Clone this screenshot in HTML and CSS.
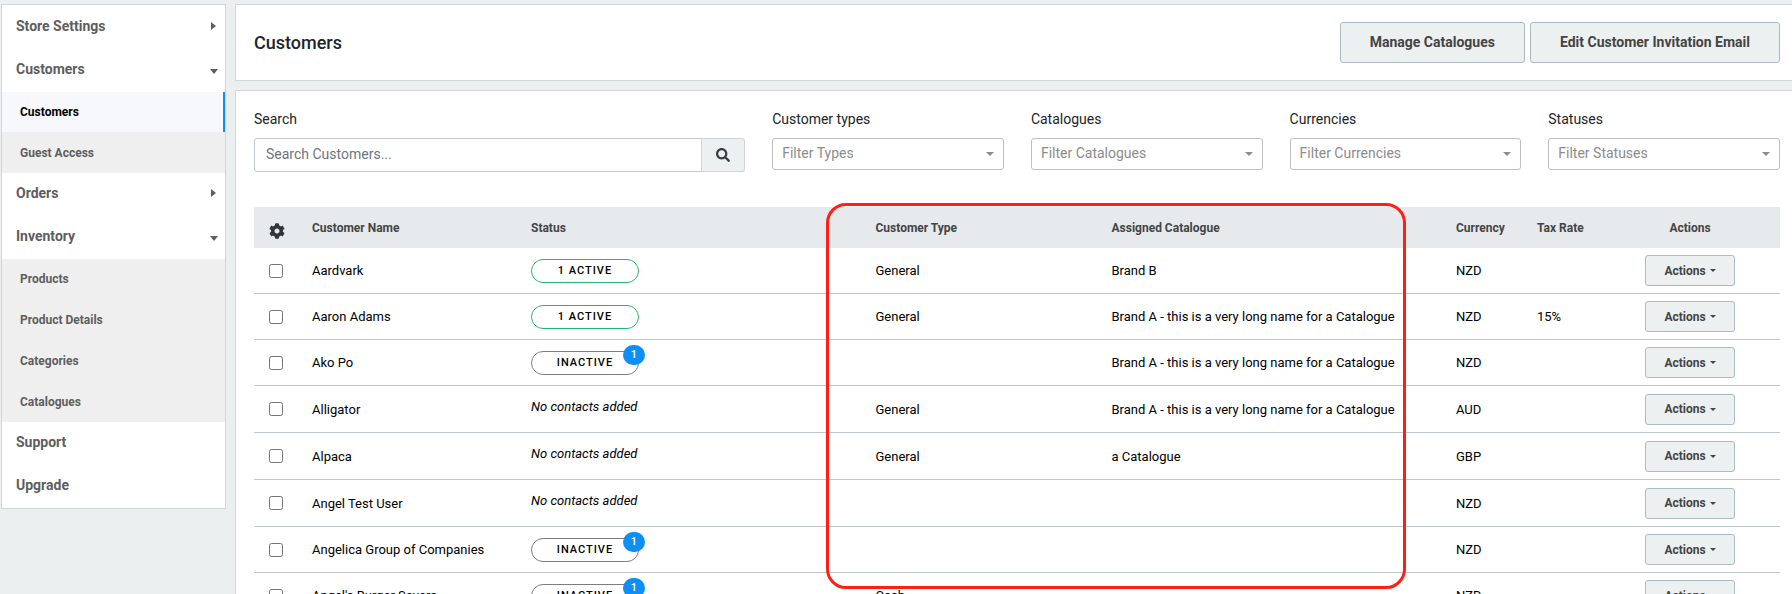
FILE: index.html
```html
<!DOCTYPE html>
<html lang="en">
<head>
  <meta charset="utf-8">
  <title>Customers</title>
  <link rel="stylesheet" href="styles.css">
</head>
<body>
  <nav class="sidebar">
    <a class="menu-item" href="#">Store Settings <span class="arrow-right"></span></a>
    <a class="menu-item" href="#">Customers <span class="arrow-down"></span></a>
    <div class="submenu">
      <a class="sub-item active" href="#">Customers</a>
      <a class="sub-item" href="#">Guest Access</a>
    </div>
    <a class="menu-item" href="#">Orders <span class="arrow-right"></span></a>
    <a class="menu-item" href="#">Inventory <span class="arrow-down"></span></a>
    <div class="submenu">
      <a class="sub-item" href="#">Products</a>
      <a class="sub-item" href="#">Product Details</a>
      <a class="sub-item" href="#">Categories</a>
      <a class="sub-item" href="#">Catalogues</a>
    </div>
    <a class="menu-item" href="#">Support</a>
    <a class="menu-item" href="#">Upgrade</a>
  </nav>

  <main class="main">
    <header class="card page-header">
      <h1>Customers</h1>
      <div class="header-buttons">
        <button class="btn btn-large" type="button">Manage Catalogues</button>
        <button class="btn btn-large" type="button">Edit Customer Invitation Email</button>
      </div>
    </header>

    <section class="card content">
      <form class="filters">
        <div class="field">
          <label for="search">Search</label>
          <div class="search-group">
            <input id="search" type="text" placeholder="Search Customers...">
            <button class="search-btn" type="button" aria-label="Search">
              <svg width="14" height="14" viewBox="0 0 512 512"><path fill="#3a3d3f" d="M505 442.700 405.300 343c-4.500-4.500-10.600-7-17-7H372c27.600-35.300 44-79.700 44-128C416 93.100 322.900 0 208 0S0 93.100 0 208s93.100 208 208 208c48.300 0 92.700-16.400 128-44v16.300c0 6.400 2.500 12.500 7 17l99.700 99.700c9.400 9.400 24.600 9.400 33.900 0l28.300-28.300c9.400-9.400 9.400-24.600.1-34zM208 336c-70.700 0-128-57.200-128-128 0-70.700 57.200-128 128-128 70.700 0 128 57.200 128 128 0 70.700-57.200 128-128 128z"/></svg>
            </button>
          </div>
        </div>
        <div class="field">
          <label for="types">Customer types</label>
          <div class="select"><select id="types"><option>Filter Types</option></select></div>
        </div>
        <div class="field">
          <label for="catalogues">Catalogues</label>
          <div class="select"><select id="catalogues"><option>Filter Catalogues</option></select></div>
        </div>
        <div class="field">
          <label for="currencies">Currencies</label>
          <div class="select"><select id="currencies"><option>Filter Currencies</option></select></div>
        </div>
        <div class="field">
          <label for="statuses">Statuses</label>
          <div class="select"><select id="statuses"><option>Filter Statuses</option></select></div>
        </div>
      </form>

      <div class="table-wrap">
        <table class="customers">
          <colgroup>
            <col class="col-check">
            <col class="col-name">
            <col>
            <col class="col-type">
            <col>
            <col class="col-currency">
            <col class="col-tax">
            <col class="col-actions">
          </colgroup>
          <thead>
            <tr>
              <th class="check"><svg class="gear" width="16" height="16" viewBox="0 0 512 512" role="img" aria-label="Settings"><path fill="#333638" d="M487.400 315.700l-42.600-24.600c4.300-23.200 4.300-47 0-70.200l42.600-24.600c4.900-2.800 7.100-8.600 5.500-14-11.100-35.600-30-67.800-54.700-94.600-3.800-4.100-10-5.100-14.800-2.300L380.800 110c-17.900-15.400-38.500-27.300-60.800-35.100V25.800c0-5.600-3.900-10.500-9.400-11.700-36.700-8.200-74.300-7.800-109.200 0-5.500 1.200-9.400 6.100-9.400 11.700V75c-22.200 7.900-42.800 19.800-60.800 35.100L88.700 85.500c-4.900-2.800-11-1.900-14.800 2.300-24.700 26.700-43.600 58.900-54.700 94.600-1.700 5.400.6 11.200 5.500 14L67.300 221c-4.300 23.200-4.300 47 0 70.200l-42.600 24.600c-4.900 2.800-7.100 8.600-5.500 14 11.100 35.600 30 67.800 54.700 94.600 3.800 4.100 10 5.100 14.800 2.300l42.600-24.600c17.900 15.400 38.500 27.300 60.800 35.100v49.200c0 5.600 3.900 10.500 9.400 11.700 36.700 8.200 74.300 7.800 109.200 0 5.500-1.200 9.400-6.100 9.400-11.700v-49.200c22.200-7.900 42.800-19.800 60.800-35.100l42.600 24.600c4.900 2.800 11 1.900 14.800-2.300 24.700-26.700 43.600-58.900 54.700-94.600 1.500-5.500-.7-11.300-5.600-14.100zM256 336c-44.100 0-80-35.900-80-80s35.900-80 80-80 80 35.900 80 80-35.900 80-80 80z"/></svg></th>
              <th>Customer Name</th>
              <th>Status</th>
              <th>Customer Type</th>
              <th>Assigned Catalogue</th>
              <th>Currency</th>
              <th>Tax Rate</th>
              <th class="actions">Actions</th>
            </tr>
          </thead>
          <tbody>
            <tr>
              <td class="check"><input type="checkbox" aria-label="Aardvark"></td>
              <td>Aardvark</td>
              <td><span class="status status-active">1 ACTIVE</span></td>
              <td>General</td>
              <td>Brand B</td>
              <td>NZD</td>
              <td></td>
              <td class="actions"><button class="btn btn-small" type="button">Actions</button></td>
            </tr>
            <tr>
              <td class="check"><input type="checkbox" aria-label="Aaron Adams"></td>
              <td>Aaron Adams</td>
              <td><span class="status status-active">1 ACTIVE</span></td>
              <td>General</td>
              <td>Brand A - this is a very long name for a Catalogue</td>
              <td>NZD</td>
              <td>15%</td>
              <td class="actions"><button class="btn btn-small" type="button">Actions</button></td>
            </tr>
            <tr>
              <td class="check"><input type="checkbox" aria-label="Ako Po"></td>
              <td>Ako Po</td>
              <td><span class="status">INACTIVE<span class="badge">1</span></span></td>
              <td></td>
              <td>Brand A - this is a very long name for a Catalogue</td>
              <td>NZD</td>
              <td></td>
              <td class="actions"><button class="btn btn-small" type="button">Actions</button></td>
            </tr>
            <tr>
              <td class="check"><input type="checkbox" aria-label="Alligator"></td>
              <td>Alligator</td>
              <td><em class="no-contacts">No contacts added</em></td>
              <td>General</td>
              <td>Brand A - this is a very long name for a Catalogue</td>
              <td>AUD</td>
              <td></td>
              <td class="actions"><button class="btn btn-small" type="button">Actions</button></td>
            </tr>
            <tr>
              <td class="check"><input type="checkbox" aria-label="Alpaca"></td>
              <td>Alpaca</td>
              <td><em class="no-contacts">No contacts added</em></td>
              <td>General</td>
              <td>a Catalogue</td>
              <td>GBP</td>
              <td></td>
              <td class="actions"><button class="btn btn-small" type="button">Actions</button></td>
            </tr>
            <tr>
              <td class="check"><input type="checkbox" aria-label="Angel Test User"></td>
              <td>Angel Test User</td>
              <td><em class="no-contacts">No contacts added</em></td>
              <td></td>
              <td></td>
              <td>NZD</td>
              <td></td>
              <td class="actions"><button class="btn btn-small" type="button">Actions</button></td>
            </tr>
            <tr>
              <td class="check"><input type="checkbox" aria-label="Angelica Group of Companies"></td>
              <td>Angelica Group of Companies</td>
              <td><span class="status">INACTIVE<span class="badge">1</span></span></td>
              <td></td>
              <td></td>
              <td>NZD</td>
              <td></td>
              <td class="actions"><button class="btn btn-small" type="button">Actions</button></td>
            </tr>
            <tr>
              <td class="check"><input type="checkbox" aria-label="Angel's Burger Savers"></td>
              <td>Angel's Burger Savers</td>
              <td><span class="status">INACTIVE<span class="badge">1</span></span></td>
              <td>Cash</td>
              <td></td>
              <td>NZD</td>
              <td></td>
              <td class="actions"><button class="btn btn-small" type="button">Actions</button></td>
            </tr>
          </tbody>
        </table>
        <div class="highlight"></div>
      </div>
    </section>
  </main>
</body>
</html>
```
FILE: styles.css
```css
* {
  box-sizing: border-box;
}

body {
  display: flex;
  align-items: flex-start;
  gap: 9px;
  height: 100vh;
  margin: 0;
  padding: 4px 0 0 1px;
  overflow: hidden;
  background-color: #ebeff0;
  color: #212529;
  font-family: Roboto, sans-serif;
  font-size: 14px;
}

a {
  text-decoration: none;
}

button, input, select {
  font-family: inherit;
  font-size: inherit;
}

/* sidebar */
.sidebar {
  flex: none;
  width: 225px;
  padding-top: 1px;
  border: 1px solid #d3d6d8;
  background-color: white;
}

.menu-item {
  display: flex;
  align-items: center;
  justify-content: space-between;
  height: 43px;
  padding: 0 7px 3px 14px;
  color: #5e5e5e;
  font-weight: bold;
}

.arrow-right {
  margin-right: 2px;
  border: 4px solid transparent;
  border-left: 5px solid #5e5e5e;
  border-right: 0;
}

.arrow-down {
  margin-top: 4px;
  border: 4px solid transparent;
  border-top: 5px solid #5e5e5e;
  border-bottom: 0;
}

.submenu {
  display: flex;
  flex-direction: column;
  gap: 1px;
  background-color: #efefef;
}

.sub-item {
  height: 40px;
  padding-left: 18px;
  color: #5e5e5e;
  font-size: 12px;
  font-weight: bold;
  line-height: 40px;
}

.sub-item.active {
  border-right: 2px solid #0d8ff5;
  background-color: #f6f8fb;
  color: black;
}

/* main */
.main {
  flex: 1;
  min-width: 0;
}

.card {
  border: 1px solid #d3d6d8;
  border-right: 0;
  background-color: white;
  padding: 17px 12px 17px 18px;
}

.page-header {
  display: flex;
  align-items: center;
  justify-content: space-between;
  margin-bottom: 9px;
}

h1 {
  margin: 0;
  font-size: 18px;
  font-weight: 500;
}

.header-buttons {
  display: flex;
  gap: 5px;
}

.btn {
  border: 1px solid #a9bbc1;
  border-radius: 3px;
  background-color: #ecf0f1;
  color: #444;
  font-weight: bold;
  cursor: pointer;
}

.btn-large {
  height: 41px;
  padding: 0 29px 2px;
}

.btn-small {
  display: inline-flex;
  align-items: center;
  justify-content: center;
  gap: 4px;
  width: 90px;
  height: 31px;
  font-size: 12px;
}

.btn-small::after {
  content: "";
  border: 3px solid transparent;
  border-top-color: #444;
  border-bottom: 0;
}

/* filters */
.filters {
  display: grid;
  grid-template-columns: 53fr repeat(4, 25fr);
  gap: 27px;
  height: 99px;
}

.field label {
  display: block;
  margin-bottom: 8px;
  line-height: 22px;
}

.search-group {
  display: flex;
  height: 34px;
}

.search-group input {
  flex: 1;
  min-width: 0;
  padding: 0 11px 2px;
  border: 1px solid #c0c8cf;
  border-radius: 3px 0 0 3px;
}

.search-group input::placeholder {
  color: #6c757d;
}

.search-btn {
  width: 44px;
  margin-left: -1px;
  padding: 0;
  border: 1px solid #cfd4d7;
  border-radius: 0 3px 3px 0;
  background-color: #ecf0f1;
}

.search-btn svg {
  display: block;
  margin: 0 auto;
}

.select {
  position: relative;
}

.select select {
  width: 100%;
  height: 32px;
  padding: 0 9px 2px;
  appearance: none;
  border: 1px solid #bfbfbf;
  border-radius: 3px;
  background-color: white;
  color: #8c8c8c;
}

.select::after {
  content: "";
  position: absolute;
  top: 14px;
  right: 10px;
  border: 4px solid transparent;
  border-top-color: #8c8c8c;
  border-bottom: 0;
}

/* table */
.table-wrap {
  position: relative;
}

.customers {
  width: 100%;
  table-layout: fixed;
  border-collapse: separate;
  border-spacing: 0;
  color: black;
  font-size: 13px;
}

.col-check { width: 50px; }
.col-name { width: 219px; }
.col-type { width: 236px; }
.col-currency { width: 81px; }
.col-tax { width: 71px; }
.col-actions { width: 180px; }

.customers th {
  height: 41px;
  padding: 0 8px;
  background-color: #e6eaed;
  color: #444;
  font-size: 12px;
  text-align: left;
}

.customers td {
  height: 46px;
  padding: 0 8px;
  border-bottom: 1px solid #bcc8cc;
}

.customers .check {
  padding: 0 0 0 15px;
}

.customers .actions {
  text-align: center;
}

.check input {
  display: block;
  width: 14px;
  height: 14px;
  margin: 0;
}

.gear {
  display: block;
  margin-top: 6px;
}

.status {
  position: relative;
  display: block;
  width: 108px;
  height: 24px;
  border: 1px solid #7d7d7d;
  border-radius: 12px;
  font-size: 11px;
  font-weight: 500;
  letter-spacing: 1px;
  line-height: 22px;
  text-align: center;
}

.status-active {
  border-color: #26b573;
}

.badge {
  position: absolute;
  top: -7px;
  right: -7px;
  width: 22px;
  height: 20px;
  border-radius: 10px;
  background-color: #0d8ff5;
  color: white;
  letter-spacing: 0;
  line-height: 19px;
}

.no-contacts {
  display: block;
  padding-bottom: 4px;
  line-height: 42px;
}

/* red frame over the type and catalogue columns */
.highlight {
  position: absolute;
  top: -4px;
  left: 572px;
  right: 374px;
  height: 386px;
  border: 3px solid #ff1f14;
  border-radius: 20px;
  pointer-events: none;
}
```
